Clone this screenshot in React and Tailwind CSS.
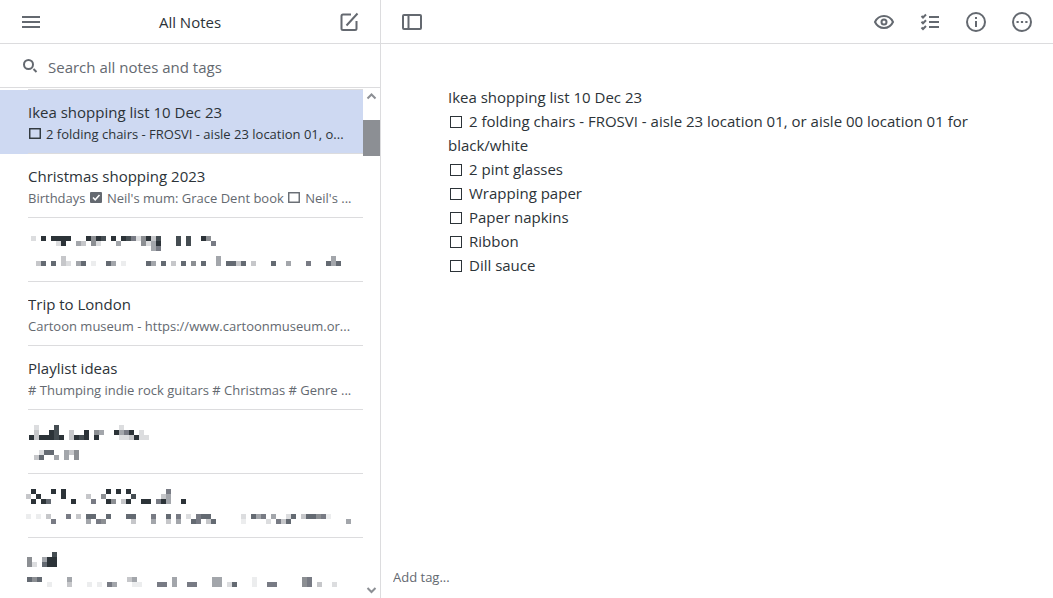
import React, { useState } from "react";

const SHADES = {
  1: "#ecedee",
  2: "#dcdddf",
  3: "#c6c7ca",
  4: "#a3a6ab",
  5: "#8c8f93",
  6: "#787b84",
  7: "#646a72",
  8: "#454d52",
  9: "#2c3338",
};

// Each row lists runs as "column:shades", one digit per 5px block.
const NOTES = [
  {
    id: "ikea",
    title: "Ikea shopping list 10 Dec 23",
    preview: ["[ ]", "2 folding chairs - FROSVI - aisle 23 location 01, o..."],
  },
  {
    id: "christmas",
    title: "Christmas shopping 2023",
    preview: ["Birthdays ", "[x]", "Neil's mum: Grace Dent book ", "[ ]", "Neil's ..."],
  },
  {
    id: "hidden-1",
    left: "ml-[3px]",
    top: "pt-[18px]",
    blocks: [
      "0:2 2:9 4:9999 11:9598 16:9 18:98625938 29:8 31:8 34:95",
      "5:29 9:43 12:52 17:4 22:5249 29:8 31:8 36:6",
      "24:46",
      "",
      "6:3 37:4 60:4",
      "1:37 4:7 6:32 9:47 12:1 15:74 18:1 23:74 26:7 28:3 30:7 32:5 34:7 37:4 39:7737 44:3 48:7 51:4 55:6 59:747",
    ],
  },
  {
    id: "london",
    title: "Trip to London",
    preview: ["Cartoon museum - https://www.cartoonmuseum.or..."],
  },
  {
    id: "playlist",
    title: "Playlist ideas",
    preview: ["# Thumping indie rock guitars # Christmas # Genre ..."],
  },
  {
    id: "hidden-2",
    left: "ml-[1px]",
    top: "pt-[15px]",
    blocks: [
      "1:2 5:8 18:2",
      "1:3 4:98 8:3 11:9 13:54 17:9469 22:2",
      "0:9399989 8:3989 13:9 18:223922",
      "",
      "",
      "2:277 7:435",
      "1:37 5:4 7:4 9:5",
    ],
  },
  {
    id: "hidden-3",
    left: "-ml-[2px]",
    top: "pt-[15px]",
    blocks: [
      "1:9 5:9 7:9 16:9 18:9 20:9 28:6",
      "0:3 2:9 7:9 12:3 15:5 21:8 27:34",
      "1:9 3:97 9:9 13:6 16:95 19:39 23:99 26:694 31:9",
      "",
      "",
      "0:1 2:1 4:3 8:6 10:3 12:77 16:7 20:77 25:6 28:7 30:6 32:2 34:677 43:2 45:746 49:4 52:27 55:377561",
      "5:6 12:4 14:65 21:3 25:4 28:3 30:4 33:76 36:37 43:1 48:2 50:637 64:4",
    ],
  },
  {
    id: "hidden-4",
    left: "-ml-[1px]",
    top: "pt-[14px]",
    blocks: [
      "5:8",
      "0:5 3:499",
      "0:52 3:799",
      "",
      "",
      "0:757 8:4 20:34 29:4 37:44 45:1 55:56",
      "4:1 8:3 12:1 14:1 16:64 21:11 26:66 29:4 32:66 37:44 40:27 45:1 48:66 55:56 58:3 61:2",
    ],
  },
];

const TASKS = [
  "2 folding chairs - FROSVI - aisle 23 location 01, or aisle 00 location 01 for black/white",
  "2 pint glasses",
  "Wrapping paper",
  "Paper napkins",
  "Ribbon",
  "Dill sauce",
];

function IconButton({ label, children }) {
  return (
    <button type="button" aria-label={label} className="flex size-6 items-center justify-center text-[#646970]">
      <svg width="24" height="24" viewBox="0 0 24 24" fill="none" stroke="currentColor" strokeWidth="2">
        {children}
      </svg>
    </button>
  );
}

function Blocks({ rows }) {
  return (
    <svg width="325" height="35" viewBox="0 0 325 35" shapeRendering="crispEdges" aria-hidden="true">
      {rows.flatMap((row, y) =>
        row
          .split(" ")
          .filter(Boolean)
          .flatMap((run) => {
            const [start, shades] = run.split(":");
            return [...shades].map((s, i) => (
              <rect
                key={`${y}-${start}-${i}`}
                x={(Number(start) + i) * 5}
                y={y * 5}
                width="5"
                height="5"
                fill={SHADES[s]}
              />
            ));
          })
      )}
    </svg>
  );
}

function PreviewBox({ checked }) {
  return (
    <svg className="mr-1 inline-block align-[-1px]" width="14" height="12" viewBox="0 0 14 12" aria-hidden="true">
      {checked ? (
        <>
          <rect x="1" y="0" width="12" height="11" rx="1" fill="currentColor" />
          <path d="M4 5.5l2.2 2.3L10.5 3" fill="none" stroke="#fff" strokeWidth="1.5" />
        </>
      ) : (
        <rect x="1.75" y="0.75" width="10.5" height="9.5" fill="none" stroke="currentColor" strokeWidth="1.4" />
      )}
    </svg>
  );
}

function NoteRow({ note, selected, onSelect }) {
  return (
    <li className={selected ? "bg-[#ced9f2]" : ""}>
      <button
        type="button"
        onClick={onSelect}
        aria-label={note.title ?? "Note"}
        aria-current={selected}
        className="block w-full pl-7 text-left"
      >
        {note.blocks ? (
          <span className={`block h-16 border-b border-[#dcdcde] ${note.top}`}>
            <span className={`block ${note.left}`}>
              <Blocks rows={note.blocks} />
            </span>
          </span>
        ) : (
          <span className="block h-16 border-b border-[#dcdcde] pt-2.5 pr-1.5">
            <span className="block truncate text-[15px] leading-6 text-[#2c3338]">{note.title}</span>
            <span
              className={`block truncate text-[13px] leading-5 ${selected ? "text-[#2c3338]" : "text-[#646970]"}`}
            >
              {note.preview.map((part, i) =>
                part === "[ ]" || part === "[x]" ? <PreviewBox key={i} checked={part === "[x]"} /> : part
              )}
            </span>
          </span>
        )}
      </button>
    </li>
  );
}

export default function App() {
  const [selected, setSelected] = useState("ikea");

  return (
    <div className="flex h-screen bg-white font-['Open_Sans','Noto_Sans',sans-serif] text-[15px] text-[#2c3338]">
      <aside className="flex w-[381px] shrink-0 flex-col border-r border-[#dcdcde]">
        <header className="flex h-11 shrink-0 items-center justify-between border-b border-[#dcdcde] px-[19px]">
          <IconButton label="Menu">
            <path d="M3 7h18M3 12h18M3 17h18" />
          </IconButton>
          <h1 className="leading-6">All Notes</h1>
          <IconButton label="New note">
            <path d="M14 4.500H6A1.500 1.500 0 0 0 4.500 6v12.500A1.500 1.500 0 0 0 6 20h12a1.500 1.500 0 0 0 1.500-1.500V11M9.500 15.500L20.500 3.500" />
          </IconButton>
        </header>

        <label className="flex h-11 shrink-0 items-center gap-1 border-b border-[#dcdcde] pr-4 pl-5">
          <svg className="shrink-0 text-[#646970]" width="24" height="24" viewBox="0 0 24 24" fill="none" stroke="currentColor" strokeWidth="2">
            <circle cx="8.5" cy="10.5" r="4.5" />
            <path d="M13.500 15l3 3" />
          </svg>
          <input
            type="text"
            aria-label="Search all notes and tags"
            placeholder="Search all notes and tags"
            className="min-w-0 flex-1 bg-transparent pt-0.5 leading-6 outline-none placeholder:text-[#646970]"
          />
        </label>

        <div className="flex min-h-0 flex-1">
          <ul className="min-w-0 flex-1 overflow-hidden pt-px">
            <li aria-hidden="true" className="ml-7 h-px bg-[#dcdcde]" />
            {NOTES.map((note) => (
              <NoteRow
                key={note.id}
                note={note}
                selected={note.id === selected}
                onSelect={() => setSelected(note.id)}
              />
            ))}
          </ul>
          <div className="flex w-[17px] shrink-0 flex-col items-center justify-between text-[#8c8f94]" aria-hidden="true">
            <div className="flex w-full flex-col items-center">
              <svg width="17" height="32" viewBox="0 0 17 32" fill="none" stroke="currentColor" strokeWidth="2">
                <path d="M4.5 10.5l4-4 4 4" />
              </svg>
              <div className="h-9 w-full bg-[#8c8f94]" />
            </div>
            <svg width="17" height="17" viewBox="0 0 17 17" fill="none" stroke="currentColor" strokeWidth="2">
              <path d="M4.5 7l4 4 4-4" />
            </svg>
          </div>
        </div>
      </aside>

      <main className="flex min-w-0 flex-1 flex-col">
        <div className="flex h-11 shrink-0 items-center justify-between border-b border-[#dcdcde] px-[19px]">
          <IconButton label="Toggle sidebar">
            <rect x="3" y="5" width="18" height="14" rx="1" />
            <path d="M8.5 5v14" />
          </IconButton>
          <div className="flex gap-[22px]">
            <IconButton label="Preview">
              <path d="M3 12c1.8-3.8 5.2-6 9-6s7.200 2.200 9 6c-1.800 3.800-5.200 6-9 6s-7.200-2.200-9-6z" />
              <circle cx="12" cy="12" r="2.500" />
            </IconButton>
            <IconButton label="Insert checklist">
              <path d="M11 7h10M11 12h10M11 17h10" />
              <path d="M3.500 6l1.500 1.500L8 4.500M3.500 11.800l1.500 1.500 3-3M3.500 17.500l1.500 1.500 3-3" />
            </IconButton>
            <IconButton label="Note info">
              <circle cx="12" cy="12" r="9" />
              <path d="M12 11v6M12 7v2" />
            </IconButton>
            <IconButton label="More actions">
              <circle cx="12" cy="12" r="9" />
              <path d="M6.500 12h2.200M10.900 12h2.200M15.300 12h2.200" />
            </IconButton>
          </div>
        </div>

        <article className="min-h-0 flex-1 overflow-hidden px-[67px] pt-[41px] leading-6">
          <h2>Ikea shopping list 10 Dec 23</h2>
          <ul>
            {TASKS.map((task) => (
              <li key={task}>
                <label>
                  <input
                    type="checkbox"
                    className="mr-[7px] ml-0.5 size-3 appearance-none border border-[#2c3338] align-[-1px] checked:bg-[#2c3338]"
                  />
                  {task}
                </label>
              </li>
            ))}
          </ul>
        </article>

        <footer className="flex h-[42px] shrink-0 items-center px-3">
          <input
            type="text"
            aria-label="Add tag"
            placeholder="Add tag..."
            className="w-full bg-transparent text-[13px] leading-5 outline-none placeholder:text-[#646970]"
          />
        </footer>
      </main>
    </div>
  );
}
